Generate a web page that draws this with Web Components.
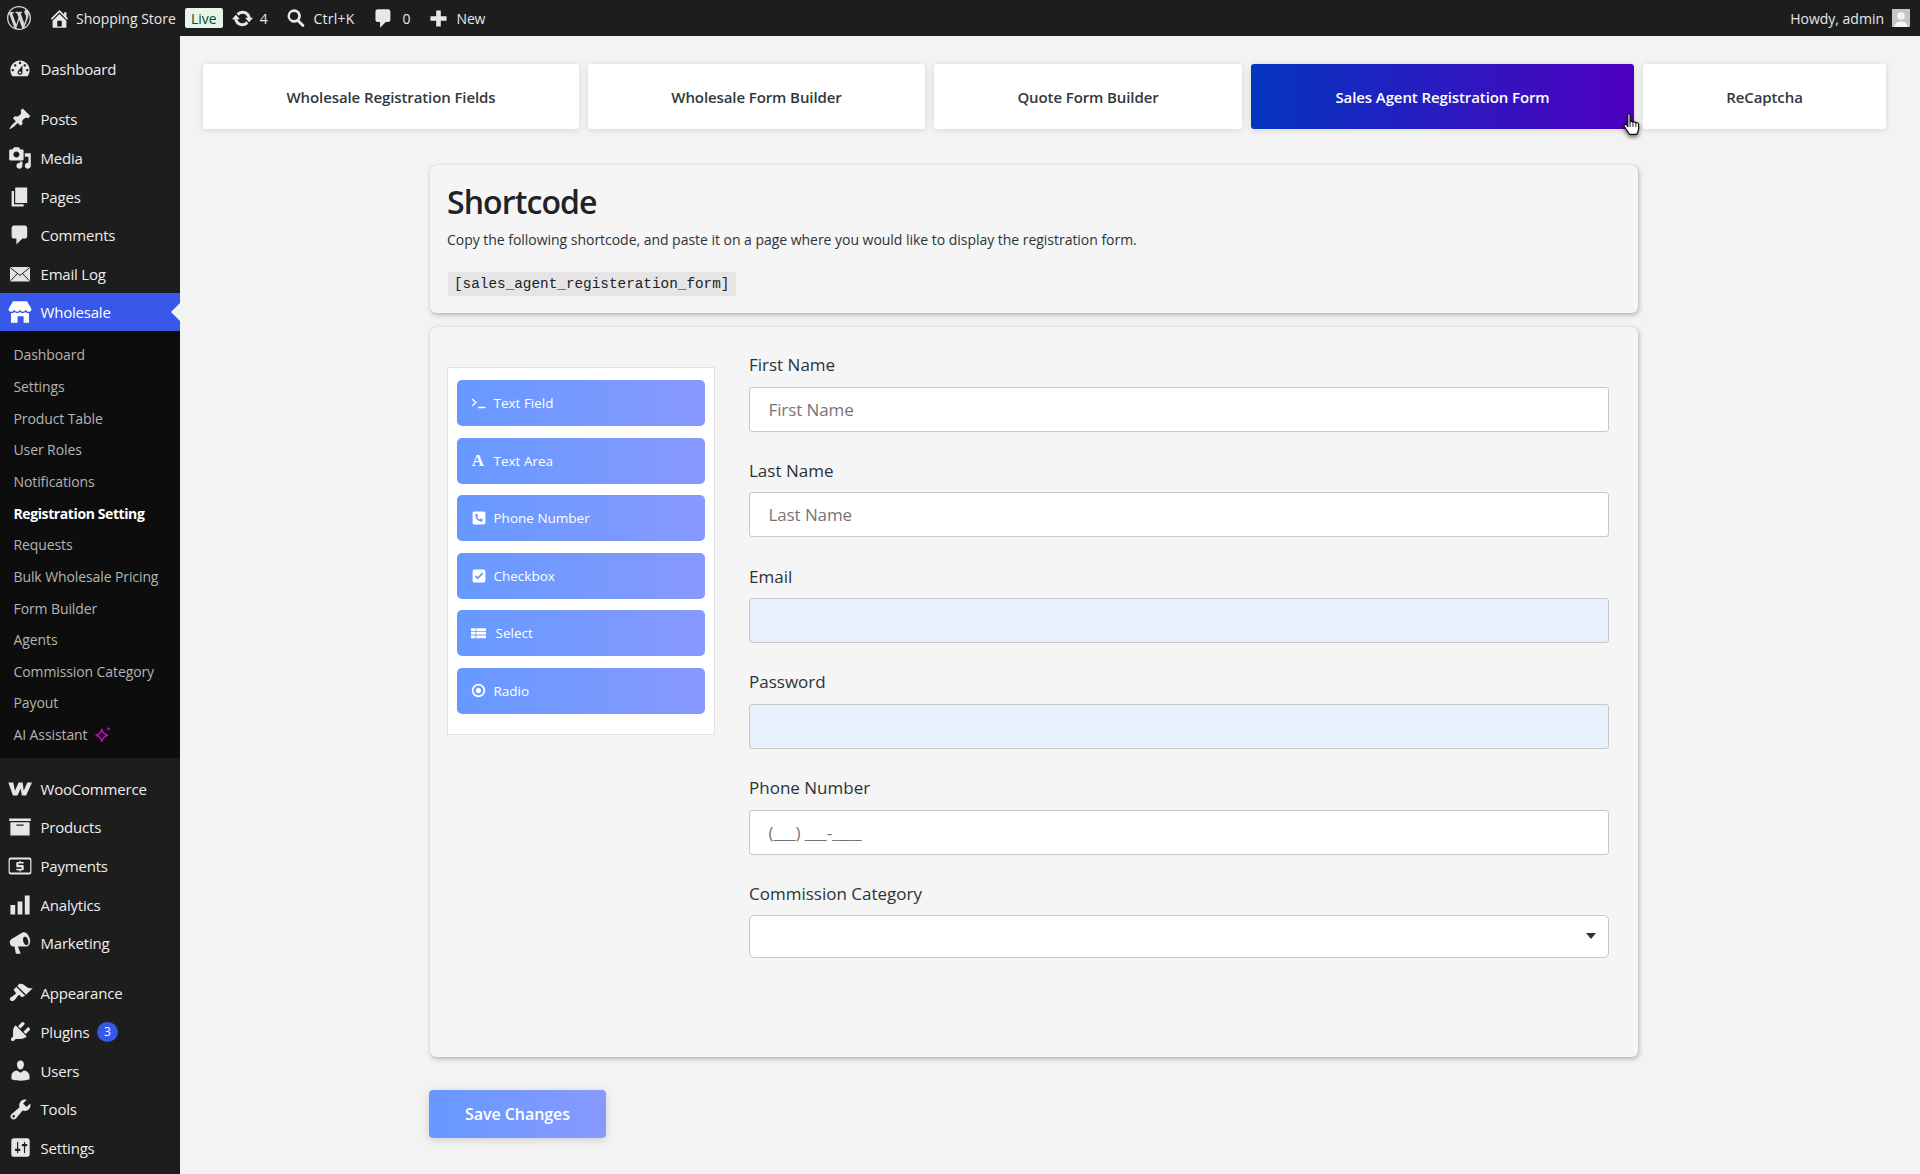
<!DOCTYPE html>
<html lang="en">
<head>
<meta charset="utf-8">
<title>Registration Setting</title>
<style>
  html, body { margin: 0; padding: 0; }
  body { background: #f3f3f3; font-family: "Open Sans", "Noto Sans", sans-serif; color: #212529; }
</style>
</head>
<body>
<admin-page></admin-page>

<script>
// dashicons-style paths, all on a 20x20 box
const ICONS = {
  wp: 'M20 10c0-5.51-4.49-10-10-10C4.48 0 0 4.49 0 10c0 5.52 4.48 10 10 10 5.51 0 10-4.48 10-10zM7.78 15.37L4.37 6.22c.55-.02 1.17-.08 1.17-.08.5-.06.44-1.13-.06-1.11 0 0-1.45.11-2.37.11-.18 0-.37 0-.58-.01C4.12 2.69 6.87 1.11 10 1.11c2.33 0 4.45.87 6.05 2.34-.68-.11-1.65.39-1.65 1.58 0 .74.45 1.36.9 2.1.35.61.55 1.36.55 2.46 0 1.49-1.4 5-1.4 5l-3.03-8.37c.54-.02.82-.17.82-.17.5-.05.44-1.25-.06-1.22 0 0-1.44.12-2.38.12-.87 0-2.33-.12-2.33-.12-.5-.03-.56 1.2-.06 1.22l.92.08 1.26 3.41zM17.41 10c.24-.64.74-1.87.43-4.25.7 1.29 1.05 2.71 1.05 4.25 0 3.29-1.73 6.24-4.4 7.78.97-2.59 1.94-5.2 2.92-7.78zM6.1 18.09C3.12 16.65 1.11 13.53 1.11 10c0-1.3.23-2.48.72-3.59C3.25 10.3 4.67 14.2 6.1 18.09zm4.03-6.63l2.58 6.98c-.86.29-1.76.45-2.71.45-.79 0-1.57-.11-2.29-.33.81-2.38 1.62-4.74 2.42-7.1z',
  home: 'M16 8.5l1.53 1.53-1.06 1.06L10 4.62l-6.47 6.47-1.06-1.06L10 2.5l4 4v-2h2v4zm-6-2.46l6 5.99V18H4v-5.97zM12 17v-5H8v5h4z',
  update: 'M10.2 3.28c3.53 0 6.43 2.61 6.92 6h2.08l-3.5 4-3.5-4h2.32c-.45-1.97-2.21-3.45-4.32-3.45-1.45 0-2.73.71-3.54 1.78L4.95 5.66C6.23 4.2 8.11 3.28 10.2 3.28zm-.4 13.44c-3.52 0-6.43-2.61-6.92-6H.8l3.5-4c1.17 1.33 2.33 2.67 3.5 4H5.48c.45 1.97 2.21 3.45 4.32 3.45 1.45 0 2.73-.71 3.54-1.78l1.71 1.95c-1.28 1.46-3.15 2.38-5.25 2.38z',
  search: 'M8 1.2a6.800 6.800 0 0 1 5.500 10.800l4.500 4.500a1.500 1.500 0 0 1-2.100 2.100l-4.500-4.500A6.800 6.800 0 1 1 8 1.200zm0 2.700a4.100 4.100 0 1 0 0 8.200 4.100 4.100 0 0 0 0-8.200z',
  comment: 'M5 2h9c1.1 0 2 .9 2 2v7c0 1.1-.9 2-2 2h-2l-5 5v-5H5c-1.1 0-2-.9-2-2V4c0-1.1.9-2 2-2z',
  plus: 'M17 8v4h-5v5H8v-5H3V8h5V3h4v5h5z',
  dashboard: 'M3.76 16h12.48c1.1-1.37 1.76-3.11 1.76-5 0-4.42-3.58-8-8-8s-8 3.58-8 8c0 1.89.66 3.63 1.76 5zM10 4c.55 0 1 .45 1 1s-.45 1-1 1-1-.45-1-1 .45-1 1-1zM6 6c.55 0 1 .45 1 1s-.45 1-1 1-1-.45-1-1 .45-1 1-1zm8 0c.55 0 1 .45 1 1s-.45 1-1 1-1-.45-1-1 .45-1 1-1zm-5.37 5.55L12 7v6c0 1.1-.9 2-2 2s-2-.9-2-2c0-.57.24-1.08.63-1.45zM4 10c.55 0 1 .45 1 1s-.45 1-1 1-1-.45-1-1 .45-1 1-1zm12 0c.55 0 1 .45 1 1s-.45 1-1 1-1-.45-1-1 .45-1 1-1zm-5 3c0-.55-.45-1-1-1s-1 .45-1 1 .45 1 1 1 1-.45 1-1z',
  post: 'M10.44 3.02l1.82-1.82 6.36 6.35-1.83 1.82c-1.05-.68-2.48-.57-3.41.36l-.75.75c-.92.93-1.04 2.35-.35 3.41l-1.83 1.82-2.41-2.41-2.8 2.79c-.42.42-3.38 2.71-3.8 2.29s1.86-3.39 2.28-3.81l2.79-2.79L4.1 9.36l1.83-1.82c1.05.69 2.48.57 3.4-.36l.75-.75c.93-.92 1.05-2.35.36-3.41z',
  media: 'M13 11V4c0-.55-.45-1-1-1h-1.67L9 1H5L3.67 3H2c-.55 0-1 .45-1 1v7c0 .55.45 1 1 1h10c.55 0 1-.45 1-1zM7 4.5c1.38 0 2.5 1.12 2.5 2.5S8.38 9.5 7 9.5 4.5 8.38 4.5 7 5.62 4.5 7 4.5zM14 6h5v10.5c0 1.38-1.12 2.5-2.5 2.5S14 17.88 14 16.5s1.12-2.5 2.5-2.5c.17 0 .34.02.5.05V9h-3V6zm-4 8.05V13h2v3.5c0 1.38-1.12 2.5-2.5 2.5S7 17.88 7 16.5 8.12 14 9.5 14c.17 0 .34.02.5.05z',
  page: 'M6 15V2h10v13H6zm-1 1h8v2H3V5h2v11z',
  store: 'M4.200 1h11.600l3.800 6.400c0 1.400-1.100 2.400-2.400 2.400-1.200 0-2.300-.9-2.400-2.100-.1 1.200-1.100 2.100-2.400 2.100S10.100 8.900 10 7.700c-.1 1.200-1.100 2.100-2.400 2.100S5.300 8.900 5.200 7.700C5.100 8.900 4 9.800 2.800 9.800 1.500 9.800.4 8.800.4 7.400L4.200 1zM2.500 11c1.300.2 2.500-.2 3.200-.9.6.6 1.300.9 2 .9s1.700-.3 2.300-.9c.6.6 1.500.9 2.300.9s1.500-.3 2-.9c.7.7 1.900 1.100 3.200.9v8h-4.500v-5.500h-5V19h-5.500z',
  woo: 'M.3 4.500h4.100l1.400 7 3.100-7h3.300l.9 7 3-7H20l-4.900 11h-3.600l-.9-5.900-2.700 5.900H4.100L.3 4.500z',
  products: 'M19 3v2H1V3h18zM2 6h16v11H2V6zm11 3V8H7v1h6z',
  payments: 'M2 3h16a1.500 1.500 0 0 1 1.500 1.500v11A1.500 1.500 0 0 1 18 17H2A1.500 1.500 0 0 1 .5 15.500v-11A1.500 1.500 0 0 1 2 3zm.2 1.500a.7.7 0 0 0-.7.7v9.600c0 .4.3.7.7.7h15.600a.7.7 0 0 0 .7-.7V5.200a.7.7 0 0 0-.7-.7H2.200zM9.400 5.800h1.200v.9h2.500v1.300H8.700v1.200h3.300c.7 0 1.100.4 1.100 1.100v2.200c0 .7-.4 1.100-1.100 1.100h-1.400v.9H9.400v-.9H6.900v-1.300h4.400v-1.200H8c-.7 0-1.100-.4-1.100-1.100V7.800c0-.7.4-1.100 1.100-1.100h1.400v-.9z',
  chart: 'M18 18V2h-4v16h4zm-6 0V7H8v11h4zm-6 0v-8H2v8h4z',
  megaphone: 'M18.150 5.940c.460 1.620.380 3.220-.020 4.480-.420 1.280-1.260 2.180-2.300 2.480-.160.060-.260.060-.400.060-.060.020-.120.020-.180.020-.060.020-.140.020-.220.020h-6.800l2.220 5.500c.020.140-.060.260-.140.340-.080.100-.240.160-.340.160H6.950c-.100 0-.260-.060-.340-.160-.080-.080-.160-.200-.140-.340l-1-5.500H4.250l-.020-.020c-.500.060-1.080-.180-1.540-.620s-.880-1.080-1.060-1.880c-.240-.800-.200-1.560-.020-2.200.180-.620.580-1.080 1.060-1.300l.020-.020 9-5.400c.100-.060.180-.100.240-.160.060-.040.140-.080.240-.120.160-.080.280-.120.440-.180 1.020-.300 2.250.160 3.240 1.140.980.980 1.800 2.400 2.300 4.180zm-2.120 5.700c.300-.120.440-.300.600-.580.180-.300.260-.600.320-.940.040-.340.060-.720.040-1.140-.020-.380-.100-.800-.200-1.220-.120-.420-.280-.820-.460-1.160-.180-.360-.380-.660-.620-.900-.240-.260-.460-.460-.720-.600-.280-.140-.540-.220-.800-.260-.280-.020-.460.020-.760.100-.280.100-.380.300-.560.580-.160.280-.240.600-.300.940-.060.320-.060.720-.040 1.120.020.420.100.840.220 1.260.120.420.240.800.420 1.160.180.360.380.660.620.920.240.240.460.460.740.600.260.120.520.220.800.240.280.020.460-.020.700-.120z',
  brush: 'M14.480 11.060L7.410 3.990l1.500-1.500c.500-.560 2.300-.470 3.510.320 1.210.800 1.430 1.280 2.910 2.100 1.180.640 2.450 1.260 4.450.850zm-.710.710L6.700 4.700 4.930 6.470c-.390.390-.390 1.020 0 1.410l1.060 1.060c.390.390.390 1.030 0 1.420-.600.600-1.430 1.110-2.210 1.690-.350.260-.700.530-1.010.840C1.430 13.230 1 14.480 2 15.500s2.270.590 3.610-.750c.310-.310.580-.660.840-1.010.580-.780 1.090-1.610 1.690-2.210.390-.390 1.020-.390 1.410 0l1.060 1.060c.390.390 1.020.390 1.410 0z',
  plugin: 'M13.110 4.360L9.870 7.600 8 5.730l3.240-3.240c.350-.340 1.050-.200 1.560.320.520.510.660 1.210.310 1.550zm-8 1.770l.910-1.120 9.010 9.010-1.190.840c-.710.710-2.630 1.160-3.820 1.160H6.140L4.900 17.260c-.590.590-1.540.590-2.120 0-.590-.580-.590-1.530 0-2.120l1.240-1.240v-3.880c0-1.130.400-3.190 1.090-3.890zm7.260 3.970l3.240-3.240c.340-.350 1.040-.210 1.550.310.520.510.660 1.210.31 1.550l-3.240 3.250z',
  users: 'M10 9.250c-2.270 0-2.730-3.440-2.730-3.440C7 4.020 7.820 2 9.970 2c2.160 0 2.980 2.020 2.710 3.810 0 0-.410 3.440-2.680 3.440zm0 2.570L12.720 10c2.390 0 4.520 2.330 4.520 4.530v2.490s-3.650 1.130-7.240 1.130c-3.650 0-7.240-1.130-7.240-1.130v-2.490c0-2.250 1.940-4.480 4.470-4.480z',
  tools: 'M16.680 9.770c-1.340 1.340-3.300 1.670-4.950.990l-5.410 6.520c-.990.990-2.590.990-3.580 0s-.990-2.590 0-3.570l6.520-5.420c-.680-1.650-.350-3.610.990-4.950 1.280-1.280 3.120-1.620 4.720-1.060l-2.890 2.890 2.820 2.820 2.860-2.870c.530 1.580.180 3.390-1.080 4.650zM3.810 16.210c.400.390 1.040.390 1.430 0 .400-.400.400-1.040 0-1.430-.390-.400-1.030-.400-1.430 0-.390.390-.390 1.030 0 1.430z',
  settings: 'M18 16V4c0-1.100-.900-2-2-2H4c-1.100 0-2 .900-2 2v12c0 1.100.900 2 2 2h12c1.100 0 2-.900 2-2zM8 11h1c.550 0 1 .450 1 1s-.450 1-1 1H8v1.500c0 .280-.220.500-.500.500s-.500-.220-.500-.500V13H6c-.550 0-1-.450-1-1s.450-1 1-1h1V5.500c0-.280.220-.500.500-.500s.500.220.500.500V11zm5-2h-1c-.550 0-1-.450-1-1s.450-1 1-1h1V5.500c0-.280.220-.500.500-.500s.500.220.500.500V7h1c.550 0 1 .450 1 1s-.450 1-1 1h-1v5.500c0 .280-.220.500-.500.500s-.500-.220-.500-.500V9z',
  phone: 'M4 2h12a2 2 0 0 1 2 2v12a2 2 0 0 1-2 2H4a2 2 0 0 1-2-2V4a2 2 0 0 1 2-2zm1.800 3.600c-.3.100-.5.400-.5.800 0 4.500 3.700 8.200 8.200 8.200.4 0 .700-.2.800-.5l.4-1.800c.1-.3-.1-.700-.4-.8l-2-.8c-.3-.1-.6 0-.8.200l-.8 1c-1.400-.7-2.500-1.800-3.200-3.200l1-.8c.2-.2.300-.5.200-.8l-.8-2c-.1-.3-.5-.5-.8-.4l-1.300.3z',
  check: 'M4 2h12a2 2 0 0 1 2 2v12a2 2 0 0 1-2 2H4a2 2 0 0 1-2-2V4a2 2 0 0 1 2-2zm4.400 12.300l7.100-7.100-1.500-1.500-5.600 5.600-2.200-2.200-1.500 1.500 3.700 3.700z',
  list: 'M0 3h6v3.600H0V3zm7 0h13v3.600H7V3zM0 7.800h6v3.600H0V7.800zm7 0h13v3.600H7V7.800zM0 12.600h6v3.600H0v-3.600zm7 0h13v3.600H7v-3.600z',
  radio: 'M10 1a9 9 0 1 1 0 18 9 9 0 0 1 0-18zm0 2.400a6.600 6.600 0 1 0 0 13.200 6.600 6.600 0 0 0 0-13.200zm0 3.100a3.500 3.500 0 1 1 0 7 3.500 3.500 0 0 1 0-7z',
};

// the mail icon is a filled envelope with dark fold lines, so it gets its own svg
const MAIL = `<svg width="22" height="22" viewBox="0 0 22 22" aria-hidden="true"><rect x="1" y="4" width="20" height="14.500" rx="1.500" fill="#e2e2e2"/><path d="M1.800 5l9.200 7.500L20.200 5M1.800 17.500l6.700-7M20.200 17.500l-6.700-7" fill="none" stroke="#1d1d1d" stroke-width="1"/></svg>`;

function icon(name, size) {
  return `<svg width="${size}" height="${size}" viewBox="0 0 20 20" fill="currentColor" aria-hidden="true"><path fill-rule="evenodd" d="${ICONS[name]}"/></svg>`;
}

class TopBar extends HTMLElement {
  connectedCallback() {
    this.attachShadow({ mode: 'open' }).innerHTML = `
      <style>
        :host { display: flex; align-items: center; height: 36px; background: #1d1d1d; color: #e8e8e8; font-size: 14px; }
        .item { display: flex; align-items: center; }
        .wp { margin-left: 7px; color: #d5d5d5; }
        .home { margin-left: 17px; }
        .site { margin-left: 5px; }
        .live { margin-left: 9px; width: 38px; height: 20px; display: flex; align-items: center; justify-content: center; background: #e7f4ea; color: #0a4b24; border-radius: 2px; font-size: 14px; }
        .updates { margin-left: 8px; }
        .updates b { font-weight: 400; margin-left: 6px; }
        .search { margin-left: 18.500px; }
        .search b { font-weight: 400; margin-left: 7px; letter-spacing: .25px; }
        .comments { margin-left: 17.500px; }
        .comments b { font-weight: 400; margin-left: 7.500px; }
        .new { margin-left: 16.500px; }
        .new b { font-weight: 400; margin-left: 6.500px; letter-spacing: -.2px; }
        .right { margin-left: auto; margin-right: 10px; }
        svg.avatar { margin-left: 8px; display: block; }
      </style>
      <span class="item wp">${icon('wp', 24)}</span>
      <span class="item home">${icon('home', 23)}</span>
      <span class="item site">Shopping Store</span>
      <span class="live">Live</span>
      <span class="item updates">${icon('update', 23)}<b>4</b></span>
      <span class="item search">${icon('search', 20)}<b>Ctrl+K</b></span>
      <span class="item comments">${icon('comment', 23)}<b>0</b></span>
      <span class="item new">${icon('plus', 23)}<b>New</b></span>
      <span class="item right">Howdy, admin<svg class="avatar" width="18" height="18" viewBox="0 0 18 18" aria-hidden="true"><rect width="18" height="18" fill="#c4c4c4"/><circle cx="9" cy="7" r="3.800" fill="#f4f4f4"/><path d="M2.500 18c0-4 2.800-5.500 6.500-5.500s6.500 1.500 6.500 5.500z" fill="#f4f4f4"/></svg></span>
    `;
  }
}

class MenuItem extends HTMLElement {
  connectedCallback() {
    const name = this.getAttribute('icon');
    const size = this.getAttribute('size') || 24;
    this.attachShadow({ mode: 'open' }).innerHTML = `
      <style>
        :host { display: flex; align-items: center; height: 38.600px; color: #eee; font-size: 15px; letter-spacing: -.2px; }
        :host([current]) { height: 38px; background: #3858e9; color: #fff; position: relative; }
        :host([current])::after { content: ""; position: absolute; right: 0; top: 50%; margin-top: -9px; border: 9px solid transparent; border-right-color: #f3f3f3; border-left-width: 0; }
        .ic { width: 40.500px; display: flex; justify-content: center; color: #e6e6e6; }
        :host([current]) .ic { color: #fff; }
      </style>
      <span class="ic">${name === 'mail' ? MAIL : icon(name, size)}</span>
      <slot></slot>
    `;
  }
}

class SubItem extends HTMLElement {
  connectedCallback() {
    this.attachShadow({ mode: 'open' }).innerHTML = `
      <style>
        :host { display: flex; align-items: center; height: 31.650px; padding-left: 13.500px; color: #b4b4b4; font-size: 14px; letter-spacing: -.1px; }
        :host([current]) { color: #fff; font-weight: 700; letter-spacing: -.4px; }
      </style>
      <slot></slot>
    `;
  }
}

class SideBar extends HTMLElement {
  connectedCallback() {
    this.attachShadow({ mode: 'open' }).innerHTML = `
      <style>
        :host { display: block; width: 180px; flex: none; background: #1d1d1d; }
        .group { padding-top: 11.500px; }
        .top { padding-top: 14px; }
        .sub { background: #0d0d0d; height: 427px; padding-top: 8px; box-sizing: border-box; }
        svg.spark { margin-left: 7px; }
        .b { display: inline-flex; align-items: center; justify-content: center; width: 21px; height: 20px; border-radius: 50%; background: #3858e9; color: #fff; font-size: 12px; margin-left: 7.500px; letter-spacing: 0; }
      </style>
      <div class="group top"><menu-item icon="dashboard">Dashboard</menu-item></div>
      <div class="group">
        <menu-item icon="post">Posts</menu-item>
        <menu-item icon="media">Media</menu-item>
        <menu-item icon="page">Pages</menu-item>
        <menu-item icon="comment">Comments</menu-item>
        <menu-item icon="mail">Email Log</menu-item>
        <menu-item icon="store" current>Wholesale</menu-item>
      </div>
      <div class="sub">
        <sub-item>Dashboard</sub-item>
        <sub-item>Settings</sub-item>
        <sub-item>Product Table</sub-item>
        <sub-item>User Roles</sub-item>
        <sub-item>Notifications</sub-item>
        <sub-item current>Registration Setting</sub-item>
        <sub-item>Requests</sub-item>
        <sub-item>Bulk Wholesale Pricing</sub-item>
        <sub-item>Form Builder</sub-item>
        <sub-item>Agents</sub-item>
        <sub-item>Commission Category</sub-item>
        <sub-item>Payout</sub-item>
        <sub-item>AI Assistant
          <svg class="spark" width="18" height="18" viewBox="0 0 16 16" fill="none" stroke="#b50fb5" stroke-width="1.300"><path d="M7 2.500c.5 3.200 1.900 5 5.500 5.700-3.600.7-5 2.500-5.500 5.800-.5-3.300-1.900-5.100-5.500-5.800C5.100 7.500 6.500 5.700 7 2.500z"/><circle cx="13" cy="2.500" r="1.200" fill="#b50fb5" stroke="none"/></svg>
        </sub-item>
      </div>
      <div class="group">
        <menu-item icon="woo">WooCommerce</menu-item>
        <menu-item icon="products">Products</menu-item>
        <menu-item icon="payments">Payments</menu-item>
        <menu-item icon="chart">Analytics</menu-item>
        <menu-item icon="megaphone">Marketing</menu-item>
      </div>
      <div class="group">
        <menu-item icon="brush" size="25">Appearance</menu-item>
        <menu-item icon="plugin" size="25">Plugins<span class="b">3</span></menu-item>
        <menu-item icon="users" size="25">Users</menu-item>
        <menu-item icon="tools" size="25">Tools</menu-item>
        <menu-item icon="settings" size="23">Settings</menu-item>
      </div>
    `;
  }
}

class TabBar extends HTMLElement {
  connectedCallback() {
    const tabs = [
      ['Wholesale Registration Fields', 376],
      ['Wholesale Form Builder', 337],
      ['Quote Form Builder', 308],
      ['Sales Agent Registration Form', 383, true],
      ['ReCaptcha', 243],
    ];
    this.attachShadow({ mode: 'open' }).innerHTML = `
      <style>
        :host { display: flex; gap: 9px; }
        .tab { height: 65px; box-sizing: border-box; padding-top: 1px; display: flex; align-items: center; justify-content: center; background: #fff; border-radius: 3px; box-shadow: 0 1px 6px rgba(0,0,0,.12); color: #32373c; font-size: 15px; font-weight: 600; letter-spacing: -.1px; flex: none; }
        .on { background: linear-gradient(90deg, #0336c0, #4f00bf); color: #fff; }
      </style>
      ${tabs.map(([t, w, on]) => `<div class="tab${on ? ' on' : ''}" style="width:${w}px">${t}</div>`).join('')}
    `;
  }
}

class AdminCard extends HTMLElement {
  connectedCallback() {
    this.attachShadow({ mode: 'open' }).innerHTML = `
      <style>
        :host { display: block; box-sizing: border-box; background: #f5f5f5; border-radius: 6px; box-shadow: 1px 2px 5px rgba(0,0,0,.26), 0 0 1px rgba(0,0,0,.2); }
      </style>
      <slot></slot>
    `;
  }
}

class ShortcodeBox extends HTMLElement {
  connectedCallback() {
    this.attachShadow({ mode: 'open' }).innerHTML = `
      <style>
        :host { display: block; height: 148px; box-sizing: border-box; padding: 15px 17px 0; color: #1d2327; }
        h2 { margin: 0; font-size: 32px; line-height: 44px; font-weight: 600; letter-spacing: -.9px; }
        p { margin: 6px 0 0; font-size: 14px; line-height: 20px; color: #2c3338; letter-spacing: -.03px; }
        code { display: inline-block; margin: 21.500px 0 0 .5px; padding: 0 6.500px; height: 24px; line-height: 24px; background: #e5e5e5; font-family: "Liberation Mono", monospace; font-size: 14.350px; color: #222; }
      </style>
      <h2>Shortcode</h2>
      <p>Copy the following shortcode, and paste it on a page where you would like to display the registration form.</p>
      <code>[sales_agent_registeration_form]</code>
    `;
  }
}

class FieldPalette extends HTMLElement {
  connectedCallback() {
    const terminal = `<svg width="16" height="12" viewBox="0 0 16 12" fill="none" stroke="currentColor" stroke-width="1.300" aria-hidden="true"><path d="M1 2l4 3.500L1 9M7 10.500h7.500"/></svg>`;
    const items = [
      [terminal, 'Text Field', 7],
      [`<span class="a">A</span>`, 'Text Area', 8],
      [icon('phone', 16), 'Phone Number', 7],
      [icon('check', 16), 'Checkbox', 7],
      [icon('list', 15), 'Select', 10],
      [icon('radio', 15), 'Radio', 8],
    ];
    this.attachShadow({ mode: 'open' }).innerHTML = `
      <style>
        :host { display: flex; flex-direction: column; gap: 11.500px; width: 268px; height: 368px; flex: none; box-sizing: border-box; padding: 12px 9px 0; background: #fff; border: 1px solid #e2e2e2; color: #fff; font-size: 13.500px; }
        .f { display: flex; align-items: center; height: 46px; flex: none; padding-left: 13.500px; border-radius: 5px; background: linear-gradient(90deg, #6699ff, #8899ff); }
        .g { display: flex; align-items: center; justify-content: flex-start; }
        .a { font: 700 17px "Liberation Serif", serif; width: 15px; text-align: center; }
      </style>
      ${items.map(([g, t, m]) => `<div class="f"><span class="g">${g}</span><span style="margin-left:${m}px">${t}</span></div>`).join('')}
    `;
  }
}

class FormField extends HTMLElement {
  connectedCallback() {
    const ph = this.getAttribute('placeholder');
    const kind = this.getAttribute('kind') || '';
    this.attachShadow({ mode: 'open' }).innerHTML = `
      <style>
        :host { display: block; height: 105.800px; color: #2c3338; }
        label { display: block; height: 35.500px; line-height: 28px; font-size: 17px; }
        .box { display: flex; align-items: center; box-sizing: border-box; height: 45px; padding: 0 18.500px; background: #fff; border: 1px solid #c8c8c8; border-radius: 3px; color: #757575; font-size: 17px; letter-spacing: -.1px; position: relative; }
        :host([kind="auto"]) .box { background: #e8f0fe; }
        :host([kind="select"]) .box { height: 43px; border-radius: 5px; }
        .caret { position: absolute; right: 12px; top: 17px; width: 0; height: 0; border: 5px solid transparent; border-top: 6px solid #333; border-bottom: 0; }
      </style>
      <label>${this.getAttribute('label')}</label>
      <div class="box">${ph || ''}${kind === 'select' ? '<span class="caret"></span>' : ''}</div>
    `;
  }
}

class HandCursor extends HTMLElement {
  connectedCallback() {
    this.attachShadow({ mode: 'open' }).innerHTML = `
      <style>
        :host { position: absolute; left: 1622px; top: 112px; width: 20px; height: 26px; }
        svg { display: block; filter: drop-shadow(0 2px 2px rgba(0,0,0,.6)); }
      </style>
      <svg width="20" height="26" viewBox="0 0 20 26" aria-hidden="true"><path d="M6.500 1.500c1 0 1.600.7 1.600 1.700V10c.3-.8 2.600-.9 2.900.4.600-.8 2.600-.6 2.900.6.700-.6 2.600-.3 2.700 1.100.2 2.400.2 4.800-.4 6.800-.4 1.500-1 2.400-1.500 3.500H7.500c-.6-1.500-2.100-3.200-3.700-5.600-.6-1-1.500-2-1.700-3-.2-1 .9-1.800 1.900-1.200.6.400 1.400 1.500 1.800 2V3.200c0-1 .7-1.700 1.700-1.700z" fill="#fff" stroke="#111" stroke-width="1.200" stroke-linejoin="round"/><path d="M8.100 10v5M11 10.500v4.500M13.900 11v4" stroke="#111" stroke-width=".9" fill="none"/></svg>
    `;
  }
}

class AdminPage extends HTMLElement {
  connectedCallback() {
    this.attachShadow({ mode: 'open' }).innerHTML = `
      <style>
        :host { display: block; position: relative; min-height: 1174px; overflow: hidden; }
        .shell { display: flex; height: 1138px; }
        main { flex: 1; padding: 28px 0 0 23px; min-width: 0; }
        .wrap { margin: 36px 0 0 227px; width: 1208px; }
        .form { height: 730px; margin-top: 14px; display: flex; padding: 40px 29px 0 17px; box-sizing: border-box; gap: 34px; }
        .fields { flex: 1; margin-top: -16px; }
        .save { display: flex; align-items: center; justify-content: center; width: 177px; height: 48px; margin: 33px 0 0 -1px; border-radius: 4px; background: linear-gradient(90deg, #6699ff, #8899ff); color: #fff; font-size: 16px; font-weight: 600; letter-spacing: -.05px; box-shadow: 0 2px 8px rgba(0,0,0,.15); }
      </style>
      <top-bar></top-bar>
      <div class="shell">
        <side-bar></side-bar>
        <main>
          <tab-bar></tab-bar>
          <div class="wrap">
            <admin-card><shortcode-box></shortcode-box></admin-card>
            <admin-card class="form">
              <field-palette></field-palette>
              <div class="fields">
                <form-field label="First Name" placeholder="First Name"></form-field>
                <form-field label="Last Name" placeholder="Last Name"></form-field>
                <form-field label="Email" kind="auto"></form-field>
                <form-field label="Password" kind="auto"></form-field>
                <form-field label="Phone Number" placeholder="(___) ___-____"></form-field>
                <form-field label="Commission Category" kind="select"></form-field>
              </div>
            </admin-card>
            <div class="save">Save Changes</div>
          </div>
        </main>
      </div>
      <hand-cursor></hand-cursor>
    `;
  }
}

customElements.define('top-bar', TopBar);
customElements.define('menu-item', MenuItem);
customElements.define('sub-item', SubItem);
customElements.define('side-bar', SideBar);
customElements.define('tab-bar', TabBar);
customElements.define('admin-card', AdminCard);
customElements.define('shortcode-box', ShortcodeBox);
customElements.define('field-palette', FieldPalette);
customElements.define('form-field', FormField);
customElements.define('hand-cursor', HandCursor);
customElements.define('admin-page', AdminPage);
</script>
</body>
</html>
